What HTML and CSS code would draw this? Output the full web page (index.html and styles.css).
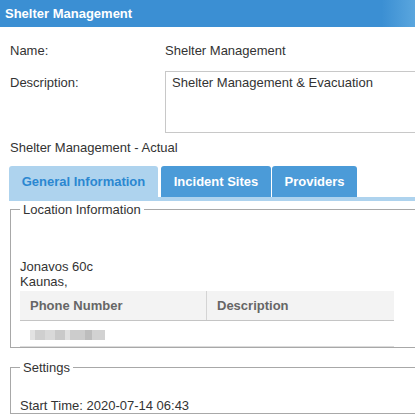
FILE: index.html
```html
<!DOCTYPE html>
<html lang="en">
<head>
    <meta charset="UTF-8">
    <title>Shelter Management</title>
    <link rel="stylesheet" href="styles.css">
</head>
<body>
    <div class="title-bar">Shelter Management</div>

    <div class="page">
        <div class="field-row name-row">
            <label>Name:</label>
            <div class="value">Shelter Management</div>
        </div>
        <div class="field-row desc-row">
            <label>Description:</label>
            <div class="textarea">Shelter Management &amp; Evacuation</div>
        </div>

        <div class="caption">Shelter Management - Actual</div>

        <div class="tabs">
            <div class="tab active">General Information</div>
            <div class="tab sites">Incident Sites</div>
            <div class="tab providers">Providers</div>
        </div>
        <div class="tab-bar"></div>

        <fieldset class="group location">
            <legend>Location Information</legend>
            <div class="address">
                <div>Jonavos 60c</div>
                <div>Kaunas,</div>
            </div>
            <table class="grid">
                <thead>
                    <tr>
                        <th class="col-phone">Phone Number</th>
                        <th>Description</th>
                    </tr>
                </thead>
                <tbody>
                    <tr>
                        <td><span class="blurred"></span></td>
                        <td></td>
                    </tr>
                </tbody>
            </table>
        </fieldset>

        <fieldset class="group settings">
            <legend>Settings</legend>
            <div class="start-time">Start Time: 2020-07-14 06:43</div>
        </fieldset>
    </div>
</body>
</html>
```

FILE: styles.css
```css
html, body {
    overflow: hidden;
}

body {
    margin: 0;
    font-family: "Liberation Sans", Arial, sans-serif;
    font-size: 13px;
    line-height: 15px;
    color: #333;
    background: #fff;
}

.title-bar {
    height: 27px;
    line-height: 27px;
    padding-left: 5px;
    background: linear-gradient(to right, #3b8fd3 92%, #5aa6de);
    color: #fff;
    font-weight: bold;
}

.page {
    width: 450px;
    padding-left: 10px;
}

.field-row {
    display: flex;
}

.field-row label {
    width: 155px;
    flex-shrink: 0;
}

.name-row {
    margin-top: 16px;
}

.desc-row {
    margin-top: 13px;
}

.desc-row label {
    padding-top: 4px;
}

.textarea {
    flex: 1;
    height: 53px;
    border: 1px solid #c8c8c8;
    padding: 3px 6px 4px;
}

.caption {
    margin-top: 7px;
}

.tabs {
    display: flex;
    margin-top: 11px;
    margin-left: -1px;
}

.tab {
    height: 31px;
    line-height: 31px;
    margin-right: 1px;
    text-align: center;
    background: #4b9bd8;
    color: #fff;
    font-weight: bold;
    border-radius: 3px 3px 0 0;
}

.tab.active {
    width: 149px;
    margin-right: 3px;
    background: #aed3ee;
    color: #2b87d1;
}

.tab.sites {
    width: 110px;
}

.tab.providers {
    width: 85px;
}

.tab-bar {
    height: 4px;
    margin-left: -1px;
    background: #aed3ee;
}

.group {
    margin: 1px 0 0 0;
    padding: 0 0 0 9px;
    border: 1px solid #a8a8a8;
}

.group legend {
    padding: 0 3px;
}

.address {
    padding-top: 42px;
}

.grid {
    width: 374px;
    margin-top: 2px;
    border-collapse: collapse;
}

.grid th {
    height: 29px;
    padding: 0 0 0 10px;
    text-align: left;
    background: #f3f3f3;
    color: #666;
    font-weight: bold;
    border-bottom: 1px solid #c4c4c4;
}

.grid th.col-phone {
    width: 176px;
    border-right: 1px solid #d4d4d4;
}

.grid td {
    height: 25px;
    padding: 0 0 0 10px;
    border-bottom: 1px solid #dcdcdc;
}

.blurred {
    display: inline-block;
    width: 75px;
    height: 10px;
    vertical-align: middle;
    background: linear-gradient(to right,
        #e2e2e2 0, #e2e2e2 5px,
        #cfcfcf 5px, #cfcfcf 15px,
        #d9d9d9 15px, #d9d9d9 25px,
        #c9c9c9 25px, #c9c9c9 35px,
        #e0e0e0 35px, #e0e0e0 40px,
        #cccccc 40px, #cccccc 55px,
        #bdbdbd 55px, #bdbdbd 62px,
        #d2d2d2 62px, #d2d2d2 75px);
}

.settings {
    margin-top: 12px;
    padding-bottom: 0;
}

.start-time {
    padding-top: 23px;
}
```
